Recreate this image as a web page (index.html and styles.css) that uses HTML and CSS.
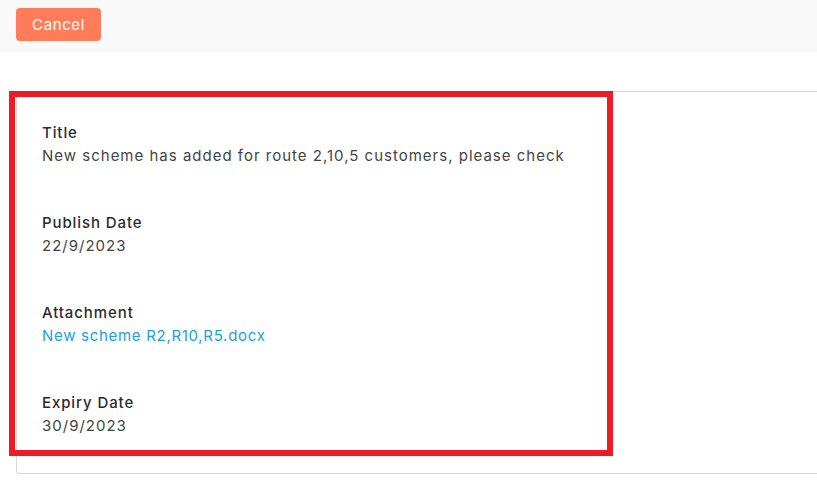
FILE: index.html
```html
<!DOCTYPE html>
<html lang="en">
<head>
<meta charset="utf-8">
<title>Notice detail</title>
<link rel="stylesheet" href="styles.css">
</head>
<body>
<div class="topbar">
  <button class="btn-cancel" type="button">Cancel</button>
</div>
<main class="main">
  <section class="card">
    <div class="field">
      <div class="label">Title</div>
      <div class="value">New scheme has added for route 2,10,5 customers, please check</div>
    </div>
    <div class="field">
      <div class="label">Publish Date</div>
      <div class="value">22/9/2023</div>
    </div>
    <div class="field">
      <div class="label">Attachment</div>
      <a class="value link" href="#">New scheme R2,R10,R5.docx</a>
    </div>
    <div class="field">
      <div class="label">Expiry Date</div>
      <div class="value">30/9/2023</div>
    </div>
    <div class="highlight"></div>
  </section>
</main>
</body>
</html>
```
FILE: styles.css
```css
html, body {
  margin: 0;
  padding: 0;
  background: #ffffff;
  overflow: hidden;
}
body {
  font-family: Inter, "Noto Sans", sans-serif;
  color: #333333;
}
.topbar {
  background: #f9f9f9;
  height: 53px;
  box-sizing: border-box;
  padding: 8px 16px;
  display: flex;
  align-items: flex-start;
}
.btn-cancel {
  width: 85px;
  height: 33px;
  border: none;
  border-radius: 4px;
  background: #ff7b59;
  color: #ffffff;
  font-family: inherit;
  font-size: 15px;
  letter-spacing: 0.6px;
  padding: 0;
}
.main {
  padding: 38px 0 0 16px;
}
.card {
  position: relative;
  box-sizing: border-box;
  border: 1px solid #d6d6d6;
  border-right: none;
  border-bottom-left-radius: 4px;
  padding: 29px 25px 36px;
  display: flex;
  flex-direction: column;
  gap: 44px;
}
.field {
  display: flex;
  flex-direction: column;
  align-items: flex-start;
}
.label {
  font-size: 15px;
  line-height: 23px;
  font-weight: 500;
  letter-spacing: 0.9px;
  color: #2b2b2b;
}
.value {
  font-size: 15px;
  line-height: 23px;
  letter-spacing: 1px;
  color: #444444;
}
.link {
  color: #1a9fe0;
  letter-spacing: 0.7px;
  text-decoration: none;
}
.highlight {
  position: absolute;
  left: -8px;
  top: -1px;
  width: 604px;
  height: 365px;
  box-sizing: border-box;
  border: 6px solid #ed1c24;
}
```
